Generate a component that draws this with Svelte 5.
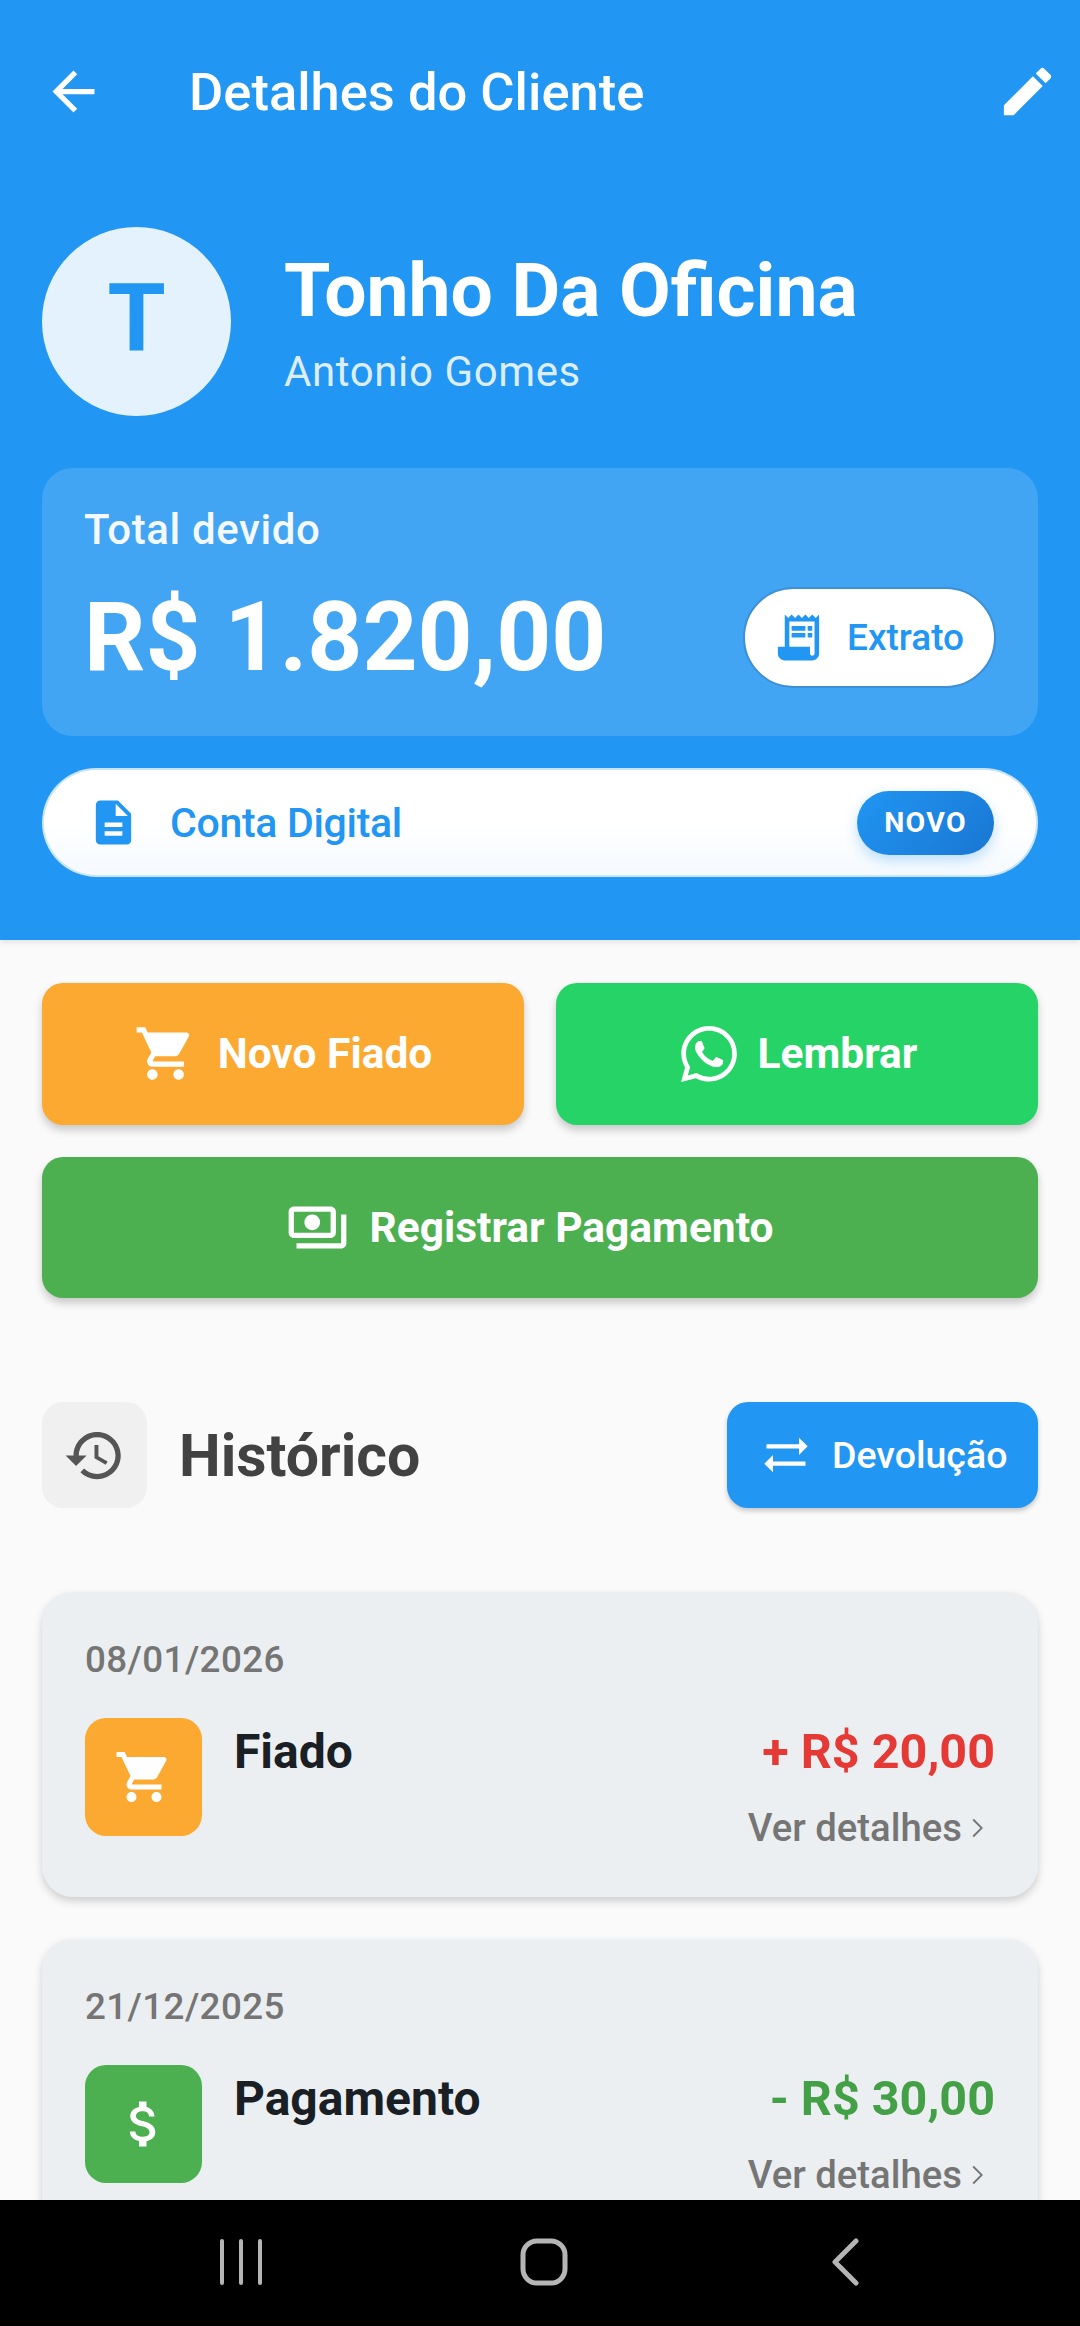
<script>
  const cartPath =
    "M7 18c-1.1 0-1.99.9-1.99 2S5.9 22 7 22s2-.9 2-2-.9-2-2-2zM1 2v2h2l3.6 7.59-1.35 2.45c-.16.28-.25.61-.25.96 0 1.1.9 2 2 2h12v-2H7.42c-.14 0-.25-.11-.25-.25l.03-.12.9-1.63h7.45c.75 0 1.41-.41 1.75-1.03l3.58-6.49c.08-.14.12-.31.12-.48 0-.55-.45-1-1-1H5.21l-.94-2H1zm16 16c-1.1 0-1.99.9-1.99 2s.89 2 1.99 2 2-.9 2-2-.9-2-2-2z";
  const moneyPath =
    "M11.8 10.9c-2.27-.59-3-1.2-3-2.15 0-1.09 1.01-1.85 2.7-1.85 1.78 0 2.44.85 2.5 2.1h2.21c-.07-1.72-1.12-3.3-3.21-3.81V3h-3v2.16c-1.94.42-3.5 1.68-3.5 3.61 0 2.31 1.91 3.46 4.7 4.13 2.5.6 3 1.48 3 2.41 0 .69-.49 1.79-2.7 1.79-2.06 0-2.87-.92-2.98-2.1h-2.2c.12 2.19 1.76 3.42 3.68 3.83V21h3v-2.15c1.95-.37 3.5-1.5 3.5-3.55 0-2.84-2.43-3.81-4.7-4.4z";

  const history = [
    { date: "08/01/2026", title: "Fiado", amount: "+ R$ 20,00", kind: "debt", icon: cartPath },
    { date: "21/12/2025", title: "Pagamento", amount: "- R$ 30,00", kind: "paid", icon: moneyPath },
  ];
</script>

<div class="screen">
  <div class="scroll">
    <header class="hero">
      <div class="appbar">
        <button class="icon-btn" type="button" aria-label="Voltar">
          <svg viewBox="0 0 24 24" width="63" height="63"><path d="M20 11H7.83l5.59-5.59L12 4l-8 8 8 8 1.41-1.41L7.83 13H20v-2z" /></svg>
        </button>
        <h1>Detalhes do Cliente</h1>
        <button class="icon-btn edit" type="button" aria-label="Editar">
          <svg viewBox="0 0 24 24" width="63" height="63"><path d="M3 17.25V21h3.75L17.81 9.94l-3.75-3.75L3 17.25zM20.71 7.04c.39-.39.39-1.02 0-1.41l-2.34-2.34c-.39-.39-1.02-.39-1.41 0l-1.83 1.83 3.75 3.75 1.83-1.83z" /></svg>
        </button>
      </div>

      <div class="profile">
        <div class="avatar">T</div>
        <div class="names">
          <div class="nick">Tonho Da Oficina</div>
          <div class="fullname">Antonio Gomes</div>
        </div>
      </div>

      <section class="total">
        <div class="total-label">Total devido</div>
        <div class="total-row">
          <div class="total-value">R$ 1.820,00</div>
          <button class="statement" type="button">
            <svg viewBox="0 0 24 24" width="55" height="55"><path d="M19.5 3.5L18 2l-1.5 1.5L15 2l-1.5 1.5L12 2l-1.5 1.5L9 2 7.5 3.5 6 2v14H3v3c0 1.66 1.34 3 3 3h12c1.66 0 3-1.34 3-3V2l-1.5 1.5zM19 19c0 .55-.45 1-1 1s-1-.45-1-1v-3H8V5h11v14z" /><path d="M9 7h6v2H9zM16 7h2v2h-2zM9 10h6v2H9zM16 10h2v2h-2z" /></svg>
            <span>Extrato</span>
          </button>
        </div>
      </section>

      <button class="digital" type="button">
        <svg viewBox="0 0 24 24" width="53" height="53"><path d="M14 2H6c-1.1 0-1.99.9-1.99 2L4 20c0 1.1.89 2 1.99 2H18c1.1 0 2-.9 2-2V8l-6-6zm2 16H8v-2h8v2zm0-4H8v-2h8v2zm-3-5V3.5L18.5 9H13z" /></svg>
        <span class="digital-label">Conta Digital</span>
        <span class="badge">NOVO</span>
      </button>
    </header>

    <main class="content">
      <div class="actions">
        <button class="action orange" type="button">
          <svg viewBox="0 0 24 24" width="63" height="63"><path d={cartPath} /></svg>
          Novo Fiado
        </button>
        <button class="action whatsapp" type="button">
          <svg viewBox="0 0 24 24" width="56" height="56"><path d="M17.472 14.382c-.297-.149-1.758-.867-2.03-.967-.273-.099-.471-.148-.67.15-.197.297-.767.966-.94 1.164-.173.199-.347.223-.644.075-.297-.15-1.255-.463-2.39-1.475-.883-.788-1.48-1.761-1.653-2.059-.173-.297-.018-.458.13-.606.134-.133.298-.347.446-.52.149-.174.198-.298.298-.497.099-.198.05-.371-.025-.52-.075-.149-.669-1.612-.916-2.207-.242-.579-.487-.5-.669-.51-.173-.008-.371-.01-.57-.01-.198 0-.52.074-.792.372-.272.297-1.04 1.016-1.04 2.479 0 1.462 1.065 2.875 1.213 3.074.149.198 2.096 3.2 5.077 4.487.709.306 1.262.489 1.694.625.712.227 1.36.195 1.871.118.571-.085 1.758-.719 2.006-1.413.248-.694.248-1.289.173-1.413-.074-.124-.272-.198-.57-.347m-5.421 7.403h-.004a9.87 9.87 0 01-5.031-1.378l-.361-.214-3.741.982.998-3.648-.235-.374a9.86 9.86 0 01-1.51-5.26c.001-5.45 4.436-9.884 9.888-9.884 2.64 0 5.122 1.03 6.988 2.898a9.825 9.825 0 012.893 6.994c-.003 5.45-4.437 9.884-9.885 9.884m8.413-18.297A11.815 11.815 0 0012.05 0C5.495 0 .16 5.335.157 11.892c0 2.096.547 4.142 1.588 5.945L.057 24l6.305-1.654a11.882 11.882 0 005.683 1.448h.005c6.554 0 11.89-5.335 11.893-11.893a11.821 11.821 0 00-3.48-8.413z" /></svg>
          Lembrar
        </button>
        <button class="action green wide" type="button">
          <svg viewBox="0 0 24 24" width="63" height="63"><path d="M19 14V6c0-1.1-.9-2-2-2H3c-1.1 0-2 .9-2 2v8c0 1.1.9 2 2 2h14c1.1 0 2-.9 2-2zm-2 0H3V6h14v8zm-7-7c-1.66 0-3 1.34-3 3s1.34 3 3 3 3-1.34 3-3-1.34-3-3-3zm13 0v11c0 1.1-.9 2-2 2H4v-2h17V7h2z" /></svg>
          Registrar Pagamento
        </button>
      </div>

      <div class="section-head">
        <div class="section-icon">
          <svg viewBox="0 0 24 24" width="63" height="63"><path d="M13 3c-4.97 0-9 4.03-9 9H1l3.89 3.89.07.14L9 12H6c0-3.87 3.13-7 7-7s7 3.13 7 7-3.13 7-7 7c-1.93 0-3.68-.79-4.94-2.06l-1.42 1.42C8.27 19.99 10.51 21 13 21c4.97 0 9-4.03 9-9s-4.03-9-9-9zm-1 5v5l4.28 2.54.72-1.21-3.5-2.08V8H12z" /></svg>
        </div>
        <h2>Histórico</h2>
        <button class="refund" type="button">
          <svg viewBox="0 0 24 24" width="52" height="52"><path d="M18 12l4-4-4-4v3H3v2h15zM6 12l-4 4 4 4v-3h15v-2H6z" /></svg>
          Devolução
        </button>
      </div>

      <div class="list">
        {#each history as item (item.date)}
          <article class="card">
            <div class="date">{item.date}</div>
            <div class="card-row">
              <div class="type-icon {item.kind}">
                <svg viewBox="0 0 24 24" width="60" height="60"><path d={item.icon} /></svg>
              </div>
              <div class="type-name">{item.title}</div>
              <div class="right">
                <div class="amount {item.kind}">{item.amount}</div>
                <div class="more">
                  Ver detalhes
                  <svg viewBox="0 0 24 24" width="40" height="40"><path d="M9.5 6.5 8.7 7.3 13.4 12l-4.7 4.7.8.8 5.5-5.5z" /></svg>
                </div>
              </div>
            </div>
          </article>
        {/each}
      </div>
    </main>
  </div>

  <nav class="navbar" aria-label="Navegação do sistema">
    <svg viewBox="0 0 44 48" width="44" height="48"><path d="M3 3v42M22 3v42M41 3v42" /></svg>
    <svg viewBox="0 0 50 50" width="50" height="50"><rect x="4" y="4" width="42" height="42" rx="14" /></svg>
    <svg viewBox="0 0 30 48" width="30" height="48"><path d="M26 3 5 24l21 21" /></svg>
  </nav>
</div>

<style>
  :global(body) {
    margin: 0;
    background: #fafafa;
  }
  .screen {
    height: 2326px;
    display: flex;
    flex-direction: column;
    overflow: hidden;
    font-family: Roboto, "Liberation Sans", sans-serif;
  }
  .scroll {
    flex: 1;
    min-height: 0;
    overflow: hidden;
    background: #fafafa;
  }
  button {
    font-family: inherit;
    border: 0;
    padding: 0;
    cursor: pointer;
  }
  svg {
    display: block;
    flex: none;
    fill: currentColor;
  }

  .hero {
    box-sizing: border-box;
    height: 940px;
    padding: 18px 42px 0;
    background: #2196f3;
    color: #fff;
    box-shadow: 0 2px 6px rgba(0, 0, 0, 0.1);
    position: relative;
  }
  .appbar {
    display: flex;
    align-items: center;
    height: 147px;
  }
  .icon-btn {
    background: none;
    color: #fff;
  }
  .edit {
    margin-left: auto;
    margin-right: -21px;
  }
  h1 {
    margin: 0 0 0 84px;
    font-size: 52.5px;
    font-weight: 500;
  }
  .profile {
    display: flex;
    align-items: center;
    gap: 53px;
    margin-top: 62px;
  }
  .avatar {
    box-sizing: border-box;
    width: 189px;
    height: 189px;
    padding-bottom: 6px;
    border-radius: 50%;
    background: #e3f2fd;
    color: #2196f3;
    display: flex;
    align-items: center;
    justify-content: center;
    font-size: 94px;
    font-weight: 700;
  }
  .names {
    margin-top: -2px;
  }
  .nick {
    font-size: 75px;
    font-weight: 700;
    line-height: 86px;
  }
  .fullname {
    font-size: 42px;
    line-height: 46px;
    margin-top: 16px;
    letter-spacing: 0.6px;
    color: rgba(255, 255, 255, 0.85);
  }
  .total {
    box-sizing: border-box;
    height: 268px;
    margin-top: 52px;
    padding: 39px 42px 0;
    border-radius: 31px;
    background: rgba(255, 255, 255, 0.15);
  }
  .total-label {
    font-size: 42px;
    font-weight: 500;
    line-height: 46px;
    color: rgba(255, 255, 255, 0.95);
    letter-spacing: 0.6px;
  }
  .total-row {
    display: flex;
    align-items: center;
    justify-content: space-between;
    margin-top: 34px;
  }
  .total-value {
    font-size: 96px;
    font-weight: 700;
    line-height: 101px;
  }
  .statement {
    display: flex;
    align-items: center;
    gap: 21px;
    box-sizing: border-box;
    width: 253px;
    height: 101px;
    padding-left: 26px;
    border-radius: 51px;
    background: #fff;
    border: 2px solid #3d8fd6;
    color: #2196f3;
    font-size: 37px;
    font-weight: 500;
  }
  .digital {
    display: flex;
    align-items: center;
    box-sizing: border-box;
    width: 100%;
    height: 109px;
    margin-top: 32px;
    padding: 0 42px 0 43px;
    border-radius: 55px;
    border: 2px solid rgba(187, 222, 251, 0.8);
    background: linear-gradient(180deg, #ffffff 50%, #f5faff 100%);
    color: #2196f3;
  }
  .digital-label {
    margin-left: 30px;
    font-size: 41px;
    font-weight: 500;
    letter-spacing: -0.3px;
  }
  .badge {
    margin-left: auto;
    width: 137px;
    height: 64px;
    line-height: 64px;
    border-radius: 32px;
    background: linear-gradient(135deg, #2196f3, #1976d2);
    box-shadow: 0 5px 13px rgba(33, 150, 243, 0.3);
    color: #fff;
    font-size: 28.5px;
    font-weight: 700;
    letter-spacing: 1.3px;
    text-align: center;
  }

  .content {
    padding: 43px 42px 0;
  }
  .actions {
    display: grid;
    grid-template-columns: 1fr 1fr;
    gap: 32px;
  }
  .action {
    display: flex;
    align-items: center;
    justify-content: center;
    gap: 21px;
    height: 141.5px;
    border-radius: 21px;
    color: #fff;
    font-size: 42.5px;
    font-weight: 700;
    box-shadow: 0 5px 8px rgba(0, 0, 0, 0.2);
  }
  .wide {
    grid-column: 1 / -1;
    padding-right: 21px;
    box-sizing: border-box;
  }
  .orange {
    background: #fca932;
  }
  .whatsapp {
    background: #25d366;
    padding-left: 4px;
  }
  .green {
    background: #4caf50;
  }

  .section-head {
    display: flex;
    align-items: center;
    margin-top: 104px;
  }
  .section-icon {
    width: 105px;
    height: 106px;
    border-radius: 21px;
    background: #f0f0f0;
    color: #555;
    display: flex;
    align-items: center;
    justify-content: center;
  }
  h2 {
    margin: 0 0 0 32px;
    font-size: 59px;
    font-weight: 700;
    color: #424242;
  }
  .refund {
    display: flex;
    align-items: center;
    gap: 20px;
    height: 106px;
    width: 311px;
    margin-left: auto;
    padding-left: 33px;
    box-sizing: border-box;
    border-radius: 21px;
    background: #2196f3;
    color: #fff;
    font-size: 37.5px;
    font-weight: 500;
    box-shadow: 0 3px 5px rgba(0, 0, 0, 0.2);
  }

  .list {
    display: flex;
    flex-direction: column;
    gap: 42px;
    margin-top: 84px;
  }
  .card {
    box-sizing: border-box;
    height: 305px;
    padding: 43px 43px 0 43px;
    border-radius: 31px;
    background: #eceff1;
    box-shadow: 0 4px 8px rgba(0, 0, 0, 0.18);
  }
  .date {
    font-size: 36.75px;
    line-height: 50px;
    font-weight: 500;
    color: #757575;
    letter-spacing: 0.4px;
  }
  .card-row {
    display: flex;
    margin-top: 33px;
  }
  .type-icon {
    width: 117px;
    height: 118px;
    border-radius: 21px;
    color: #fff;
    display: flex;
    align-items: center;
    justify-content: center;
  }
  .type-icon.debt {
    background: #fca932;
  }
  .type-icon.paid {
    background: #4caf50;
  }
  .type-name {
    margin: 6px 0 0 32px;
    font-size: 48px;
    line-height: 55px;
    font-weight: 700;
    color: #1a1f26;
  }
  .right {
    margin-left: auto;
    text-align: right;
  }
  .amount {
    margin-top: 6px;
    font-size: 48.5px;
    line-height: 55px;
    font-weight: 700;
  }
  .amount.debt {
    color: #e53935;
  }
  .amount.paid {
    color: #43a047;
  }
  .more {
    display: flex;
    align-items: center;
    justify-content: flex-end;
    margin-top: 26px;
    margin-right: -3px;
    font-size: 38.3px;
    font-weight: 500;
    color: #757575;
  }
  .more svg {
    margin-left: -4px;
  }

  .navbar {
    flex: none;
    height: 126px;
    background: #000;
    display: grid;
    grid-template-columns: 482px 123px 475px;
    align-items: center;
    justify-items: center;
  }
  .navbar svg {
    margin-top: -2px;
    fill: none;
    stroke: #b5b5b5;
    stroke-linecap: round;
    stroke-linejoin: round;
  }
  .navbar svg:nth-child(1) {
    stroke-width: 4px;
  }
  .navbar svg:nth-child(2) {
    stroke-width: 5px;
  }
  .navbar svg:nth-child(3) {
    margin-left: 5px;
    stroke-width: 5px;
  }
</style>
